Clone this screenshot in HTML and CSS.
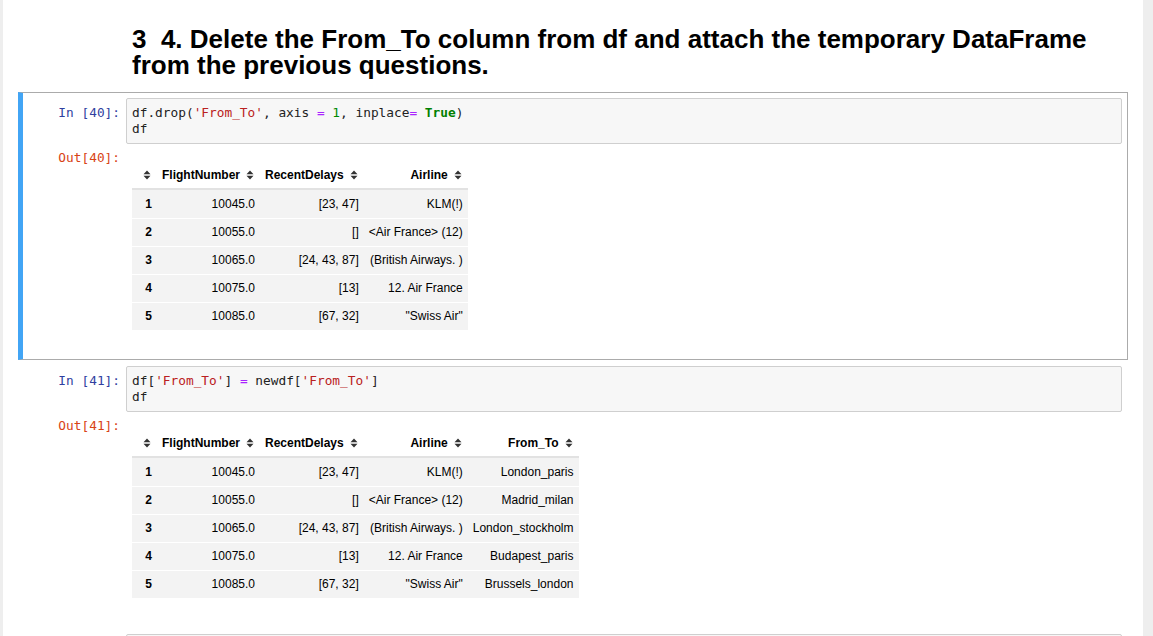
FILE: index.html
```html
<!DOCTYPE html>
<html>
<head>
<meta charset="utf-8">
<link rel="stylesheet" href="styles.css">
</head>
<body>
<div class="page">
  <div class="cell text-cell">
    <div class="md">
      <h1>3&nbsp;&nbsp;4. Delete the From_To column from df and attach the temporary DataFrame from the previous questions.</h1>
    </div>
  </div>

  <div class="cell selected">
    <div class="row">
      <div class="prompt in">In&nbsp;[40]:</div>
      <div class="input"><pre>df.drop(<span class="s">'From_To'</span>, axis <span class="o">=</span> <span class="n">1</span>, inplace<span class="o">=</span> <span class="k">True</span>)
df</pre></div>
    </div>
    <div class="row">
      <div class="prompt out">Out[40]:</div>
      <div class="output">
        <table class="df">
          <thead>
            <tr>
              <th class="idx"><svg class="sort" viewBox="0 0 9 10" width="9" height="10"><path d="M0.5 4.3L4 0.6L7.5 4.3Z M0.5 5.7L4 9.4L7.5 5.7Z"/></svg></th>
              <th>FlightNumber<svg class="sort" viewBox="0 0 9 10" width="9" height="10"><path d="M0.5 4.3L4 0.6L7.5 4.3Z M0.5 5.7L4 9.4L7.5 5.7Z"/></svg></th>
              <th>RecentDelays<svg class="sort" viewBox="0 0 9 10" width="9" height="10"><path d="M0.5 4.3L4 0.6L7.5 4.3Z M0.5 5.7L4 9.4L7.5 5.7Z"/></svg></th>
              <th>Airline<svg class="sort" viewBox="0 0 9 10" width="9" height="10"><path d="M0.5 4.3L4 0.6L7.5 4.3Z M0.5 5.7L4 9.4L7.5 5.7Z"/></svg></th>
            </tr>
          </thead>
          <tbody>
            <tr><th class="idx">1</th><td>10045.0</td><td>[23, 47]</td><td>KLM(!)</td></tr>
            <tr><th class="idx">2</th><td>10055.0</td><td>[]</td><td>&lt;Air France&gt; (12)</td></tr>
            <tr><th class="idx">3</th><td>10065.0</td><td>[24, 43, 87]</td><td>(British Airways. )</td></tr>
            <tr><th class="idx">4</th><td>10075.0</td><td>[13]</td><td>12. Air France</td></tr>
            <tr><th class="idx">5</th><td>10085.0</td><td>[67, 32]</td><td>"Swiss Air"</td></tr>
          </tbody>
        </table>
      </div>
    </div>
  </div>

  <div class="cell">
    <div class="row">
      <div class="prompt in">In&nbsp;[41]:</div>
      <div class="input"><pre>df[<span class="s">'From_To'</span>] <span class="o">=</span> newdf[<span class="s">'From_To'</span>]
df</pre></div>
    </div>
    <div class="row">
      <div class="prompt out">Out[41]:</div>
      <div class="output">
        <table class="df">
          <thead>
            <tr>
              <th class="idx"><svg class="sort" viewBox="0 0 9 10" width="9" height="10"><path d="M0.5 4.3L4 0.6L7.5 4.3Z M0.5 5.7L4 9.4L7.5 5.7Z"/></svg></th>
              <th>FlightNumber<svg class="sort" viewBox="0 0 9 10" width="9" height="10"><path d="M0.5 4.3L4 0.6L7.5 4.3Z M0.5 5.7L4 9.4L7.5 5.7Z"/></svg></th>
              <th>RecentDelays<svg class="sort" viewBox="0 0 9 10" width="9" height="10"><path d="M0.5 4.3L4 0.6L7.5 4.3Z M0.5 5.7L4 9.4L7.5 5.7Z"/></svg></th>
              <th>Airline<svg class="sort" viewBox="0 0 9 10" width="9" height="10"><path d="M0.5 4.3L4 0.6L7.5 4.3Z M0.5 5.7L4 9.4L7.5 5.7Z"/></svg></th>
              <th>From_To<svg class="sort" viewBox="0 0 9 10" width="9" height="10"><path d="M0.5 4.3L4 0.6L7.5 4.3Z M0.5 5.7L4 9.4L7.5 5.7Z"/></svg></th>
            </tr>
          </thead>
          <tbody>
            <tr><th class="idx">1</th><td>10045.0</td><td>[23, 47]</td><td>KLM(!)</td><td>London_paris</td></tr>
            <tr><th class="idx">2</th><td>10055.0</td><td>[]</td><td>&lt;Air France&gt; (12)</td><td>Madrid_milan</td></tr>
            <tr><th class="idx">3</th><td>10065.0</td><td>[24, 43, 87]</td><td>(British Airways. )</td><td>London_stockholm</td></tr>
            <tr><th class="idx">4</th><td>10075.0</td><td>[13]</td><td>12. Air France</td><td>Budapest_paris</td></tr>
            <tr><th class="idx">5</th><td>10085.0</td><td>[67, 32]</td><td>"Swiss Air"</td><td>Brussels_london</td></tr>
          </tbody>
        </table>
      </div>
    </div>
  </div>

  <div class="cell">
    <div class="row">
      <div class="prompt in">In&nbsp;[&nbsp;]:</div>
      <div class="input"><pre> </pre></div>
    </div>
  </div>
</div>
</body>
</html>
```

FILE: styles.css
```css
html, body {
  margin: 0;
  height: 636px;
  overflow: hidden;
}
body {
  background: #eeeeee;
  font-family: "Liberation Sans", Arial, sans-serif;
  color: #000;
}
.page {
  width: 1140px;
  margin-left: 3px;
  min-height: 636px;
  background: #fff;
  padding: 0 15px;
  box-sizing: border-box;
}
.cell {
  display: flex;
  flex-direction: column;
  border: 1px solid transparent;
  padding: 5px;
}
.cell.selected {
  border-color: #ababab;
  border-left: 5px solid #42a5f5;
  padding-left: 1px;
}
.md {
  padding: 0 6px 0 108px;
}
.md h1 {
  font-size: 26px;
  line-height: 26px;
  font-weight: bold;
  margin: 20px 0 8px;
  color: #000;
}
.row {
  display: flex;
}
.prompt {
  width: 102px;
  flex: none;
  box-sizing: border-box;
  padding: 7px 6px 0 0;
  text-align: right;
  font: 12.8px/16px "DejaVu Sans Mono", monospace;
}
.prompt.in {
  color: #303f9f;
}
.prompt.out {
  color: #d84315;
  padding-top: 6px;
}
.input {
  flex: 1;
  min-width: 0;
  background: #f7f7f7;
  border: 1px solid #cfcfcf;
  border-radius: 2px;
  padding: 6px 5px;
}
.input pre {
  margin: 0;
  font: 12.8px/16px "DejaVu Sans Mono", monospace;
  color: #222;
}
.s { color: #ba2121; }
.o { color: #aa22ff; }
.n { color: #008800; }
.k { color: #008000; font-weight: bold; }

.output {
  flex: 1;
  padding: 18px 6px 0;
}
.df {
  border-collapse: separate;
  border-spacing: 0;
  font-size: 12px;
  margin-bottom: 24px;
  color: #000;
}
.df th, .df td {
  text-align: right;
  line-height: 14px;
  padding: 0 5px;
  white-space: nowrap;
}
.df thead th {
  font-weight: bold;
  padding-top: 6px;
  padding-bottom: 6px;
  border-bottom: 2px solid #e2e2e2;
}
.df tbody th, .df tbody td {
  background: #f3f3f3;
  border-top: 1px solid #fff;
  padding-top: 6px;
  padding-bottom: 7px;
}
.df tbody tr:first-child th, .df tbody tr:first-child td {
  border-top: none;
  padding-top: 7px;
}
.df tbody th {
  font-weight: bold;
}
.df .idx {
  width: 15px;
}
.sort {
  display: inline-block;
  vertical-align: -1px;
  margin-left: 6px;
  fill: #333;
}
.df th.idx .sort {
  margin-left: 0;
}
```
